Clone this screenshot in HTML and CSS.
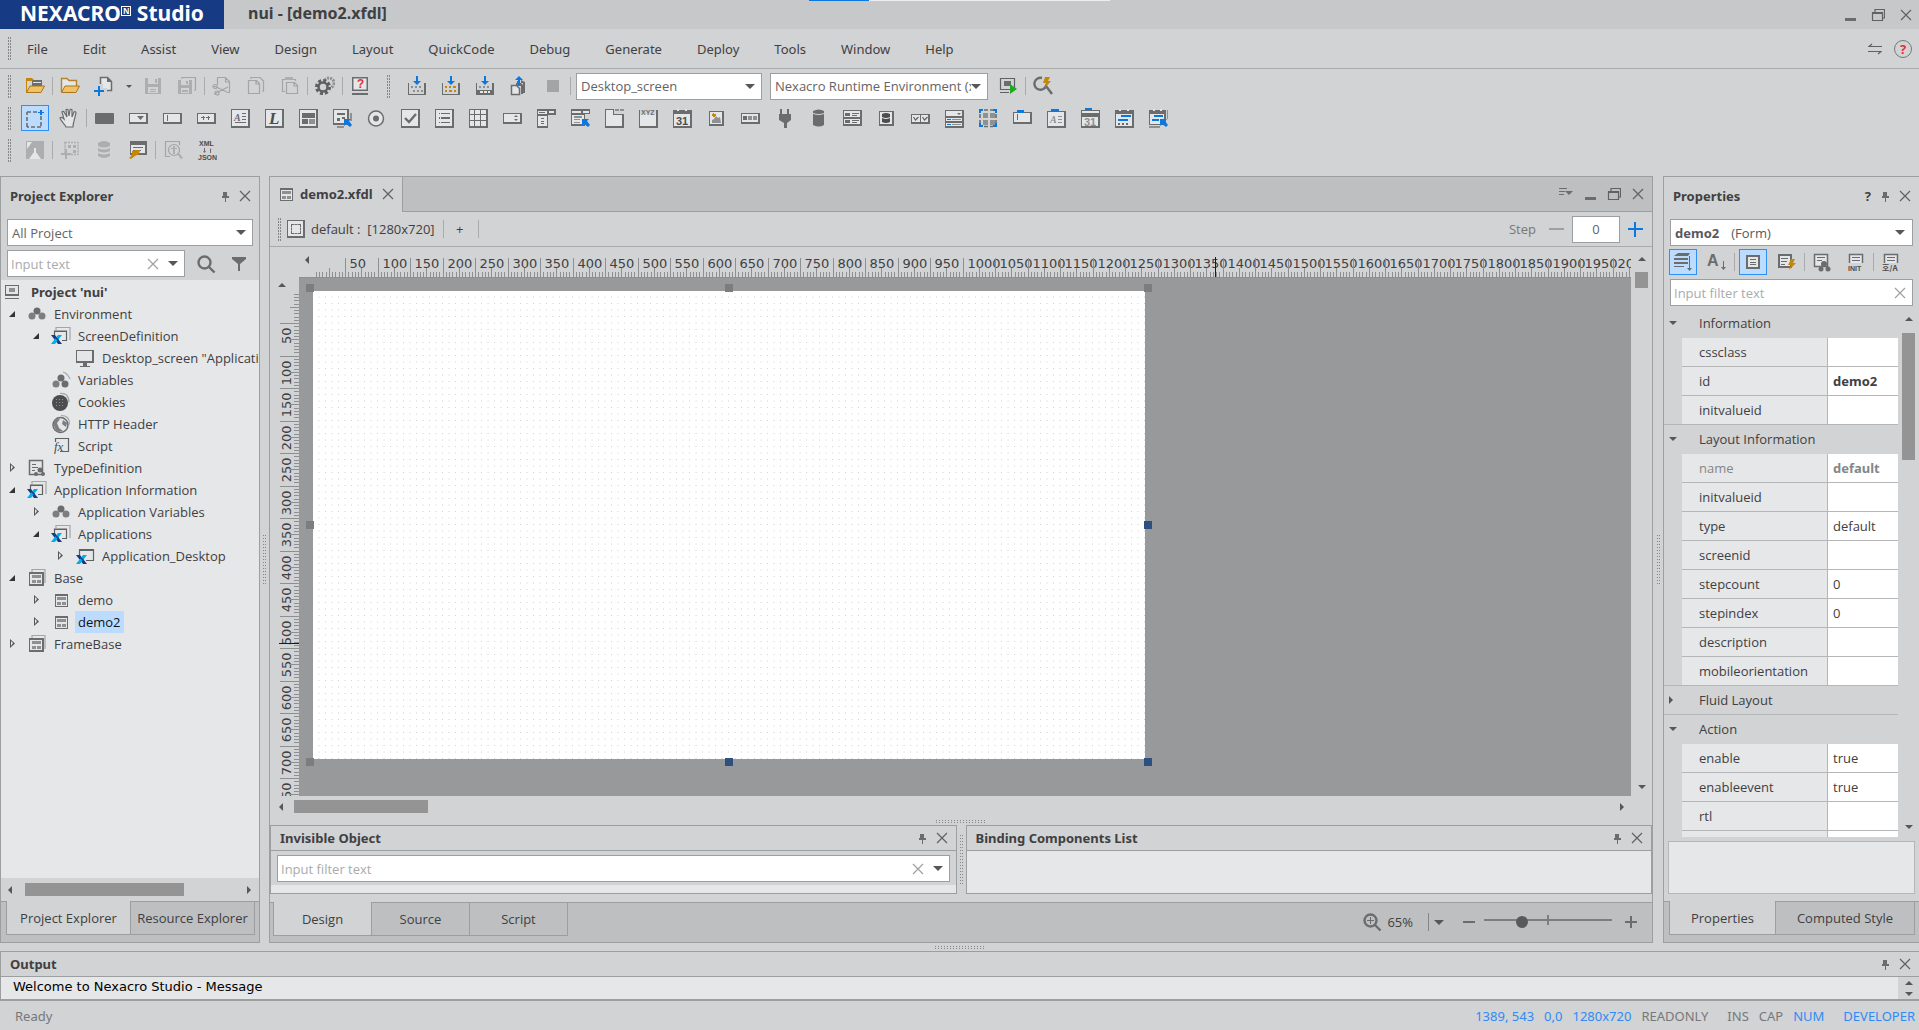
FILE: index.html
```html
<!DOCTYPE html>
<html lang="en">
<head>
  <meta charset="UTF-8">
  <meta name="viewport" content="width=device-width, initial-scale=1.0">
  <title>nui - [demo2.xfdl]</title>
  <link rel="stylesheet" href="styles.css">
</head>
<body>
  <!-- icon sprite -->
  <svg class="sprite" aria-hidden="true">
    <symbol id="close" viewBox="0 0 12 12"><path class="line" d="M1 1L11 11M11 1L1 11"/></symbol>
    <symbol id="pin" viewBox="0 0 12 12"><path class="d" d="M4 2h4v4h2v2H7v4H6V8H3V6h1z"/></symbol>
    <symbol id="minimize" viewBox="0 0 12 12"><path class="d" d="M1 9h11v3H1z"/></symbol>
    <symbol id="restore" viewBox="0 0 14 12"><path class="line" d="M1.500 3.500h10v8h-10zM1 4.500h10M4 3V.5h9.500V9H12"/></symbol>
    <symbol id="tabmenu" viewBox="0 0 14 12"><path class="d" d="M0 0h8v1H0zM0 3h6v1H0zM0 6h5v1H0zM6 3h8l-4 4z"/></symbol>
    <symbol id="swap" viewBox="0 0 14 12"><path class="line" d="M14 3.500H1L4 1M0 8.500h13L10 11"/></symbol>

    <symbol id="openproj" viewBox="0 0 20 20"><path class="o" d="M1 2h6l2 2v1H2v11H1z"/><path class="d" d="M7 5l1-1h9v6H7z"/><path class="l" d="M8 6h8v1H8z"/><path class="flap" d="M5 10h14.500l-3.500 6.500H1.500z"/></symbol>
    <symbol id="folder" viewBox="0 0 20 20"><path class="folder" d="M1.500 16V2.500H7l2 2h7.500V10"/><path class="flap" d="M5 10h14.500l-3.500 6.500H1.500z"/></symbol>
    <symbol id="newfile" viewBox="0 0 20 20"><path class="box" d="M6.500 1.500h7l4 4v9h-11z"/><path class="d" d="M13 1l5 5h-5z"/><path class="halo" d="M4 8h5v4h4v4H4z"/><path class="b" d="M4 10h2v4h4v2H6v4H4v-4H0v-2h4z"/></symbol>
    <symbol id="save" viewBox="0 0 20 20"><path class="g" d="M2 2h16v16H2z"/><path class="bg" d="M5 2h10v6H5zM5 11h10v6H5z"/><path class="g" d="M12 3h2v4h-2zM7 13h6v1H7zM7 15h6v1H7z"/></symbol>
    <symbol id="saveall" viewBox="0 0 20 20"><path class="gline" d="M5 3V1.500h13.500V14H17"/><path class="g" d="M1 4h14v14H1z"/><path class="bg" d="M4 4h8v5H4zM4 12h8v5H4z"/><path class="g" d="M9 5h2v3H9zM5 14h6v2H5z"/></symbol>
    <symbol id="cut" viewBox="0 0 20 20"><path class="gline" d="M5.500 9V1.500h8l4 4v11H15M13.500 2v4H17M2 10l13 6M2 18l14-7"/><circle class="gline" cx="3" cy="10.500" r="2"/><circle class="gline" cx="5" cy="17" r="2"/></symbol>
    <symbol id="copy" viewBox="0 0 20 20"><path class="gline" d="M5 3V1.500h9l3.500 3.500v10H16M2.500 4.500h8l3 3v10h-11zM10 5v3h3"/></symbol>
    <symbol id="paste" viewBox="0 0 20 20"><path class="gline" d="M5 15.500H2.500v-12h13V5M6.500 6.500h8l3 3v8h-11zM14 7v3h3"/><path class="g" d="M5 1h8v3H5z"/></symbol>
    <symbol id="gear" viewBox="0 0 20 20"><circle class="cog2" cx="14" cy="7" r="5"/><circle class="bg" cx="8" cy="11" r="7.500"/><circle class="cog" cx="8" cy="11" r="6.500"/><circle class="ring" cx="8" cy="11" r="4.500"/></symbol>
    <symbol id="helpdoc" viewBox="0 0 20 20"><path class="d" d="M2 1h16v14H2zM2 17h16v2H2z"/><path class="l" d="M3.500 2.500h13v11h-13z"/><text class="t-red" x="7" y="12">?</text></symbol>
    <symbol id="deploy" viewBox="0 0 20 20"><path class="d" d="M1 7h1v11h15V7h2v12H1z"/><path class="g2" d="M4 10h2v2H4zM8 10h2v2H8zM12 10h2v2h-2zM6 14h2v2H6zM10 14h2v2h-2zM14 14h2v2h-2z"/><path class="b" d="M9 0h2v5h3l-4 4-4-4h3z"/></symbol>
    <symbol id="deploy2" viewBox="0 0 20 20"><path class="d" d="M1 7h1v11h15V7h2v12H1z"/><path class="o" d="M4 10h2v2H4zM8 10h2v2H8zM12 10h3v2h-3zM4 14h2v2H4zM8 14h3v2H8zM13 14h2v2h-2z"/><path class="b" d="M9 0h2v5h3l-4 4-4-4h3z"/></symbol>
    <symbol id="deploy3" viewBox="0 0 20 20"><path class="d" d="M1 7h1v7h15V7h2v12H1z"/><path class="l" d="M5 15h3v2H5zM9 15h3v2H9zM13 15h2v2h-2z"/><path class="g2" d="M4 10h2v2H4zM8 10h2v2H8zM12 10h2v2h-2z"/><path class="b" d="M9 0h2v5h3l-4 4-4-4h3z"/></symbol>
    <symbol id="upload" viewBox="0 0 20 20"><path class="d" d="M8 5h3v2H8zM12 4l4 2v11h-2V7h-2zM7 7h5l2 2v9h-2v-8H7z"/><path class="box" d="M2.500 9.500h5l3 3v6h-8z"/><path class="b" d="M10 0l4 4h-3v5H9V4H6z"/></symbol>
    <symbol id="stop" viewBox="0 0 20 20"><path class="stop" d="M4 4h12v12H4z"/></symbol>
    <symbol id="run" viewBox="0 0 20 20"><path class="line" d="M2.500 2.500h14v11h-14zM2 16.500h9"/><path class="d" d="M6 5h7v5H6z"/><path class="green" d="M12 8l7 5-7 5z"/></symbol>
    <symbol id="quick" viewBox="0 0 20 20"><path class="thick" d="M9 2A6 6 0 1 0 13 10L19 18"/><path class="o" d="M12 1h5l-2 4h3l-6 7 1-5h-3z"/></symbol>

    <symbol id="marquee" viewBox="0 0 20 20"><path class="dash" d="M2 4h11M16 8v11M16 19H2M2 19V4"/><path class="b" d="M15 2h2v2h2v1h-2v2h-2V5h-2V4h2z"/></symbol>
    <symbol id="hand" viewBox="0 0 20 20"><path class="palm" d="M7 19c-1-3-4-4-6-9 1-1 2-1 4 1L3 4c0-1 2-1 2 0l3 5-1-7c0-1 2-1 2 0l1 6 1-6c0-1 2-1 2 0v7l2-5c1-1 2 0 2 1l-2 8c-1 3-1 4-1 6z"/></symbol>
    <symbol id="w-button" viewBox="0 0 20 20"><rect class="d" x="1" y="5" width="19" height="11" rx="1"/></symbol>
    <symbol id="w-combo" viewBox="0 0 20 20"><path class="d" d="M1 5h19v11H1z"/><path class="l" d="M2 6h16v8H2z"/><path class="d" d="M9 8h7l-3.500 4z"/></symbol>
    <symbol id="w-edit" viewBox="0 0 20 20"><path class="d" d="M1 5h19v11H1z"/><path class="l" d="M2 6h16v8H2z"/><path class="d" d="M5 7h1v6H5z"/></symbol>
    <symbol id="w-mask" viewBox="0 0 20 20"><path class="d" d="M1 5h19v11H1z"/><path class="l" d="M2 6h16v8H2z"/><path class="d" d="M7 8h1v1h1v1H8v2H7v-2H5V9h2zM12 8h1v1h1v1h-1v2h-1v-2h-2V9h2z"/></symbol>
    <symbol id="w-text" viewBox="0 0 20 20"><path class="d" d="M1 1h19v19H1z"/><path class="l" d="M2 2h16v16H2z"/><path class="d" d="M12 5h4v1h-4zM12 8h4v1h-4zM12 11h4v1h-4zM5 14h11v1H5z"/><text class="t-serif" x="4" y="13">A</text></symbol>
    <symbol id="w-static" viewBox="0 0 20 20"><path class="d" d="M1 1h19v19H1z"/><path class="l" d="M2 2h16v16H2z"/><text class="t-big" x="5" y="16">L</text></symbol>
    <symbol id="w-div" viewBox="0 0 20 20"><path class="d" d="M1 1h19v19H1z"/><path class="l" d="M2 2h16v16H2z"/><path class="d" d="M4 5h13v5H4zM4 11h6v5H4z"/><path class="g2" d="M11 11h6v5h-6z"/></symbol>
    <symbol id="w-popdiv" viewBox="0 0 20 20"><path class="g2" d="M18 5h2v8h-2zM5 18h7v2H5z"/><path class="d" d="M1 1h16v16H1z"/><path class="l" d="M2 2h13v13H2z"/><path class="d" d="M5 5h8v2H5zM5 10h3v3H5zM10 9h3v2h-3z"/><path class="b" d="M12 11h7l-2 2 3 4-2 2-4-3-2 2z"/></symbol>
    <symbol id="w-radio" viewBox="0 0 20 20"><circle class="box" cx="10" cy="10.500" r="7.500"/><circle class="d" cx="10" cy="10.500" r="3"/></symbol>
    <symbol id="w-check" viewBox="0 0 20 20"><path class="d" d="M1 1h19v19H1z"/><path class="l" d="M2 2h16v16H2z"/><path class="thick" d="M5 10l4 4 7-8"/></symbol>
    <symbol id="w-list" viewBox="0 0 20 20"><path class="d" d="M1 1h19v19H1z"/><path class="l" d="M2 2h16v16H2z"/><path class="d" d="M5 5h1v1H5zM7 5h9v1H7zM5 9h1v2H5zM7 9h9v2H7zM5 14h1v1H5zM7 14h9v1H7z"/></symbol>
    <symbol id="w-grid" viewBox="0 0 20 20"><path class="d" d="M1 1h19v19H1z"/><path class="l" d="M2 2h4v4H2zM7 2h5v4H7zM13 2h5v4h-5zM2 7h4v5H2zM7 7h5v5H7zM13 7h5v5h-5zM2 13h4v5H2zM7 13h5v5H7zM13 13h5v5h-5z"/></symbol>
    <symbol id="w-spin" viewBox="0 0 20 20"><path class="d" d="M1 5h19v11H1z"/><path class="l" d="M2 6h16v8H2z"/><path class="d" d="M12 9l2-2 2 2zM12 11h4l-2 2z"/></symbol>
    <symbol id="w-menu" viewBox="0 0 20 20"><path class="d" d="M1 1h19v6h-8v13H1z"/><path class="l" d="M2 3h9v3H2zM13 3h5v2h-5zM2 8h9v10H2z"/><path class="d" d="M3 4h6v1H3zM5 10h3v1H5zM5 13h3v1H5zM5 15h3v1H5z"/></symbol>
    <symbol id="w-popmenu" viewBox="0 0 20 20"><path class="d" d="M1 1h19v5h-5v12H1z"/><path class="l" d="M2 3h9v2H2zM13 3h6v2h-6zM2 7h12v9H2z"/><path class="g2" d="M4 8h8v2H4zM4 11h6v1H4zM4 14h6v1H4z"/><path class="b" d="M12 11h7l-2 2 3 4-2 2-4-3-2 2z"/></symbol>
    <symbol id="w-tab" viewBox="0 0 20 20"><path class="d" d="M1 1h9v5h10v14H1z"/><path class="l" d="M2 2h7v5h9v11H2z"/><path class="g2" d="M11 1h4v2h-4zM16 1h4v2h-4z"/></symbol>
    <symbol id="w-group" viewBox="0 0 20 20"><path class="d" d="M1 2h1v16h16V2h2v18H1z"/><path class="l" d="M2 6h16v12H2z"/><text class="t-mini" x="3" y="7">XYZ</text></symbol>
    <symbol id="w-cal" viewBox="0 0 20 20"><path class="d" d="M1 2h19v18H1z"/><path class="l" d="M2 6h16v12H2zM5 1h2v2H5zM13 1h2v2h-2z"/><text class="t-cal" x="4" y="17">31</text></symbol>
    <symbol id="w-image" viewBox="0 0 20 20"><path class="d" d="M3 3h15v15H3z"/><path class="l" d="M4 4h12v12H4z"/><path class="g2" d="M6 15v-3l2-1 2-3 2 2 2-1 1 6z"/><path class="o" d="M6 6h1V5h1v1h2v2H9v1H7V8H6z"/></symbol>
    <symbol id="w-progress" viewBox="0 0 20 20"><path class="d" d="M1 5h19v11H1z"/><path class="l" d="M2 6h16v8H2z"/><path class="d" d="M3 8h4v4H3z"/><path class="g2" d="M8 8h4v4H8zM13 8h4v4h-4z"/></symbol>
    <symbol id="w-plugin" viewBox="0 0 20 20"><path class="d" d="M6 1h2v5h5V1h2v5h2v6l-4 3v5h-3v-5l-5-3V6h1z"/></symbol>
    <symbol id="w-data" viewBox="0 0 20 20"><path class="d" d="M5 3q6-3 11 0v2q-5 2-11 0zM5 6q6 2 11 0v11q-5 3-11 0z"/></symbol>
    <symbol id="w-listview" viewBox="0 0 20 20"><path class="d" d="M1 2h19v16H1z"/><path class="l" d="M2 3h16v6H2zM2 11h16v5H2z"/><path class="d" d="M3 5h5v3H3zM10 5h7v1h-7zM10 7h5v1h-5zM3 12h5v3H3zM10 12h7v1h-7zM10 14h5v1h-5z"/></symbol>
    <symbol id="w-filedown" viewBox="0 0 20 20"><path class="d" d="M3 3h15v15H3z"/><path class="l" d="M4 4h12v12H4z"/><path class="dark" d="M6 6q4-2 8 0v3q-4 2-8 0zM6 10q4 2 8 0v4q-4 2-8 0z"/></symbol>
    <symbol id="w-checkset" viewBox="0 0 20 20"><path class="d" d="M1 6h19v10H1z"/><path class="l" d="M2 7h8v7H2zM11 7h7v7h-7z"/><path class="line" d="M3.500 9l2 3 3-3M12.500 9l2 3 3-3"/></symbol>
    <symbol id="w-multi" viewBox="0 0 20 20"><path class="d" d="M1 2h19v18H1z"/><path class="l" d="M2 3h16v5H2zM2 10h16v3H2zM2 15h16v3H2z"/><path class="d" d="M13 5h4l-2 2z"/><path class="b" d="M3 11h4v1H3zM3 16h4v1H3z"/><path class="g2" d="M8 11h9v1H8zM8 16h9v1H8z"/></symbol>
    <symbol id="w-layout" viewBox="0 0 20 20"><path class="dash" d="M6 2h9M6 18.500h9M2 6v9M18 6v9"/><path class="g2" d="M5 5h5v5H5zM12 5h5v5h-5zM5 12h5v5H5zM12 12h5v5h-5z"/><path class="b" d="M1 1h4v2H3v2H1zM15 1h4v4h-2V3h-2zM1 15h2v2h2v2H1zM17 15h2v4h-4v-2h2z"/></symbol>
    <symbol id="w-popedit" viewBox="0 0 20 20"><path class="d" d="M1 4h19v12H1z"/><path class="l" d="M2 5h16v9H2z"/><path class="d" d="M5 6h1v6H5z"/><path class="b" d="M5 2h7v3H5z"/></symbol>
    <symbol id="w-textarea" viewBox="0 0 20 20"><path class="d" d="M1 3h19v17H1z"/><path class="l" d="M2 4h16v14H2z"/><path class="g2" d="M12 8h4v1h-4zM12 11h4v1h-4zM12 14h4v1h-4z"/><path class="b" d="M5 1h8v3H5z"/><text class="t-serif t-gray" x="4" y="15">A</text></symbol>
    <symbol id="w-popcal" viewBox="0 0 20 20"><path class="d" d="M1 2h19v18H1z"/><path class="l" d="M2 3h17v2H2zM2 9h16v9H2z"/><path class="b" d="M5 0h7v2H5z"/><text class="t-cal t-gray" x="4" y="18">31</text></symbol>
    <symbol id="w-daterange" viewBox="0 0 20 20"><path class="d" d="M1 2h19v18H1z"/><path class="l" d="M2 6h16v12H2zM5 1h2v2H5zM13 1h2v2h-2z"/><path class="b" d="M7 7h10v2H7zM4 11h10v2H4z"/><path class="d" d="M4 15h2v2H4zM8 15h2v2H8zM12 15h2v2h-2z"/></symbol>
    <symbol id="w-poprange" viewBox="0 0 20 20"><path class="d" d="M1 2h17v15H1z"/><path class="l" d="M2 6h14v10H2zM5 1h2v2H5zM12 1h2v2h-2z"/><path class="b" d="M6 7h9v2H6zM4 11h7v2H4zM12 11h7l-2 2 3 4-2 2-4-3-2 2z"/><path class="g2" d="M1 18h11v2H1zM19 2h1v9h-1z"/></symbol>

    <symbol id="theme" viewBox="0 0 20 20"><path class="g" d="M1 1h18v18H1z"/><path class="l" d="M9 8h2v4l5 7H4l5-7zM2 2h5L2 9z"/></symbol>
    <symbol id="addgrid" viewBox="0 0 20 20"><path class="gdash" d="M5 2.500h13v12H5z"/><path class="g" d="M8 5h3v3H8zM13 5h3v3h-3zM13 10h3v3h-3zM5 9h2v4h4v2H7v4H5v-4H1v-2h4z"/></symbol>
    <symbol id="dataset" viewBox="0 0 20 20"><path class="g" d="M4 3q6-4 12 0v3q-6 3-12 0zM4 8q6 3 12 0v3q-6 3-12 0zM4 13q6 3 12 0v3q-6 4-12 0z"/></symbol>
    <symbol id="bind" viewBox="0 0 20 20"><path class="d" d="M2 1h17v14H2z"/><path class="l" d="M3 5h14v8H3z"/><path class="d" d="M5 7h10v1H5zM5 10h8v1H5z"/><path class="o" d="M4 11l4-1h4l-1 4-4 2-4 3-2-1 3-3z"/></symbol>
    <symbol id="preview" viewBox="0 0 20 20"><path class="gline" d="M16.500 5V1.500h-14v15H7"/><circle class="gline" cx="11" cy="10" r="5.500"/><path class="g" d="M10 6h2v8h-2zM8 8h6v1H8zM14 14l2-1 4 5-2 1z"/></symbol>
    <symbol id="xmljson" viewBox="0 0 20 20"><text class="t-xml" x="2" y="6">XML</text><path class="d" d="M7 8h1v3h1l-1.500 2L6 11h1zM13 8l1.500 2H14v3h-1z"/><text class="t-xml" x="1" y="20">JSON</text></symbol>

    <symbol id="project" viewBox="0 0 16 16"><path class="d" d="M1 1h14v11H1zM1 14h14v1H1z"/><path class="l" d="M2 2h12v8H2z"/><path class="g2" d="M5 4h6v4H5z"/></symbol>
    <symbol id="cubes" viewBox="0 0 20 20"><circle class="d" cx="10" cy="7" r="3.500"/><circle class="g3" cx="5" cy="12" r="3.500"/><circle class="g3" cx="15" cy="12" r="3.500"/></symbol>
    <symbol id="vars" viewBox="0 0 20 20"><path class="gline" d="M12 2q4 1 7 7"/><circle class="d" cx="10" cy="8" r="3.500"/><circle class="g3" cx="5" cy="14" r="3.500"/><circle class="d" cx="14" cy="14" r="3.500"/></symbol>
    <symbol id="cookie" viewBox="0 0 20 20"><path class="gline" d="M9 1.500q9-1 9 9"/><circle class="dark" cx="9" cy="11" r="8"/><path class="g2" d="M5 7h1v1H5zM8 7h1v1H8zM11 7h1v1h-1zM5 10h1v1H5zM8 10h1v1H8zM11 10h1v1h-1zM5 13h1v1H5zM8 13h1v1H8zM11 13h1v1h-1z"/></symbol>
    <symbol id="globe" viewBox="0 0 20 20"><path class="gline" d="M10 1.500q9 0 8.500 9"/><circle class="box" cx="9.500" cy="11" r="7.500"/><path class="g3" d="M3 8q3-4 6-3l-3 4 2 5 4 3-5 1q-5-4-4-10zM12 6l4 3-1 4-4-3z"/></symbol>
    <symbol id="script" viewBox="0 0 20 20"><path class="l" d="M5 3h12v12H5z"/><path class="line" d="M4.500 6V2.500h13v13H9"/><text class="t-fx" x="3" y="15">fx</text></symbol>
    <symbol id="typedef" viewBox="0 0 20 20"><path class="box" d="M2.500 2.500h13v14h-13z"/><path class="d" d="M5 6h4v1H5zM5 9h6v1H5zM5 12h3v1H5z"/><circle class="d" cx="13" cy="12" r="2.500"/><circle class="d" cx="9" cy="16" r="2"/><circle class="d" cx="16" cy="16" r="2"/></symbol>
    <symbol id="xapps" viewBox="0 0 20 20"><path class="gline" d="M5 4V1.500h14V14"/><path class="line" d="M3.500 9V5h12v9.500H11M3 5.500h13"/><path class="navy" d="M0 9h4l7 9H7z"/><path class="cyan" d="M7 9h4l-7 9H0z"/><path class="navy" d="M4 12l3 3 1-1-3-3z"/></symbol>
    <symbol id="xapp" viewBox="0 0 20 20"><path class="line" d="M4.500 9V3.500h14v11H11M4 4.500h14"/><path class="navy" d="M1 9h4l7 9H8z"/><path class="cyan" d="M8 9h4l-7 9H1z"/><path class="navy" d="M5 12l3 3 1-1-3-3z"/></symbol>
    <symbol id="screen" viewBox="0 0 20 20"><path class="d" d="M1 2h18v13H1zM8 15h4v3h3v1H5v-1h3z"/><path class="l" d="M2 3h15v10H2z"/></symbol>
    <symbol id="forms" viewBox="0 0 20 20"><path class="gline" d="M5 4V1.500h13V15"/><path class="d" d="M2 4h15v14H2z"/><path class="l" d="M3 6h12v10H3z"/><path class="g2" d="M5 7h9v3H5zM5 12h4v3H5zM10 12h4v3h-4z"/></symbol>
    <symbol id="form" viewBox="0 0 20 20"><path class="d" d="M4 4h13v13H4z"/><path class="l" d="M5 6h11v10H5z"/><path class="g2" d="M6 7h9v3H6zM6 12h4v3H6zM11 12h4v3h-4z"/></symbol>
    <symbol id="search" viewBox="0 0 20 20"><circle class="thick" cx="8.500" cy="8.500" r="6"/><path class="thick" d="M13 13l5.500 5.500"/></symbol>
    <symbol id="filter" viewBox="0 0 16 16"><path class="d" d="M1 1h14v2L9 8v7H7V8L1 3z"/></symbol>
    <symbol id="zoomin" viewBox="0 0 20 20"><circle class="thick" cx="8.500" cy="8.500" r="6"/><path class="thick" d="M13 13l5.500 5.500"/><path class="d" d="M8 5h1v3h3v1H9v3H8V9H5V8h3z"/></symbol>

    <symbol id="p-group" viewBox="0 0 20 20"><path class="d" d="M5 1h12l-2 3H1zM1 6h14v2H1zM1 10h14v2H1zM1 14h10v1H1zM16 4h1v12h2l-2.500 3L14 16h2z"/></symbol>
    <symbol id="p-sort" viewBox="0 0 20 20"><text class="t-sort" x="0" y="14">A</text><path class="d" d="M16 9h1v6h2l-2.500 3-2.500-3h2z"/></symbol>
    <symbol id="p-prop" viewBox="0 0 20 20"><path class="d" d="M3 3h14v14H3z"/><path class="l" d="M5 5h10v10H5z"/><path class="d" d="M7 7h6v1H7zM7 10h6v1H7zM7 12h6v1H7z"/></symbol>
    <symbol id="p-event" viewBox="0 0 20 20"><path class="d" d="M1 2h14v14H1z"/><path class="l" d="M3 4h10v10H3z"/><path class="d" d="M4 6h7v1H4zM4 9h6v1H4zM4 12h4v1H4z"/><path class="o" d="M14 7h4l-2 4h3l-7 7 2-5h-3z"/></symbol>
    <symbol id="p-bind" viewBox="0 0 20 20"><path class="box" d="M2.500 2.500h13v12h-13z"/><path class="d" d="M5 5h8v1H5zM5 8h5v1H5z"/><circle class="d" cx="12" cy="12" r="3"/><circle class="d" cx="9" cy="17" r="2.500"/><circle class="d" cx="16" cy="17" r="2.500"/></symbol>
    <symbol id="p-init" viewBox="0 0 20 20"><path class="box" d="M3.500 11V2.500h13V11"/><path class="d" d="M6 5h8v1H6zM6 8h8v1H6z"/><text class="t-xml" x="2" y="19">INIT</text></symbol>
    <symbol id="p-lang" viewBox="0 0 20 20"><path class="box" d="M3.500 11V2.500h13V11"/><path class="d" d="M6 5h8v1H6zM6 8h8v1H6z"/><text class="t-lang" x="1" y="19">호/A</text></symbol>
  </svg>

  <header class="titlebar">
    <div class="logo">NEXACRO<sup>N</sup> Studio</div>
    <h1>nui - [demo2.xfdl]</h1>
    <div class="loading"><span></span></div>
    <div class="winbtns">
      <button aria-label="Minimize"><svg class="i12"><use href="#minimize"/></svg></button>
      <button aria-label="Restore"><svg class="i14"><use href="#restore"/></svg></button>
      <button aria-label="Close"><svg class="i12"><use href="#close"/></svg></button>
    </div>
  </header>

  <nav class="menubar">
    <span class="grip"></span>
    <button>File</button>
    <button>Edit</button>
    <button>Assist</button>
    <button>View</button>
    <button>Design</button>
    <button>Layout</button>
    <button>QuickCode</button>
    <button>Debug</button>
    <button>Generate</button>
    <button>Deploy</button>
    <button>Tools</button>
    <button>Window</button>
    <button>Help</button>
    <div class="menu-right">
      <button aria-label="Switch"><svg class="i14"><use href="#swap"/></svg></button>
      <button class="round-help">?</button>
    </div>
  </nav>

  <div class="toolbars">
    <div class="toolbar">
      <span class="grip"></span>
      <button aria-label="Open project"><svg><use href="#openproj"/></svg></button>
      <i class="sep"></i>
      <button aria-label="Open file"><svg><use href="#folder"/></svg></button>
      <button aria-label="New"><svg><use href="#newfile"/></svg></button>
      <button class="drop" aria-label="New options"><i class="caret small"></i></button>
      <button aria-label="Save"><svg><use href="#save"/></svg></button>
      <button aria-label="Save all"><svg><use href="#saveall"/></svg></button>
      <i class="sep"></i>
      <button aria-label="Cut"><svg><use href="#cut"/></svg></button>
      <button aria-label="Copy"><svg><use href="#copy"/></svg></button>
      <button aria-label="Paste"><svg><use href="#paste"/></svg></button>
      <i class="sep"></i>
      <button aria-label="Options"><svg><use href="#gear"/></svg></button>
      <i class="sep"></i>
      <button aria-label="Help"><svg><use href="#helpdoc"/></svg></button>
      <span class="grip"></span>
      <button aria-label="Generate file"><svg><use href="#deploy"/></svg></button>
      <button aria-label="Generate application"><svg><use href="#deploy2"/></svg></button>
      <button aria-label="Generate all"><svg><use href="#deploy3"/></svg></button>
      <button aria-label="Upload"><svg><use href="#upload"/></svg></button>
      <button aria-label="Stop"><svg><use href="#stop"/></svg></button>
      <i class="sep"></i>
      <span class="select screen"><select aria-label="Screen"><option>Desktop_screen</option></select></span>
      <span class="select runtime"><select aria-label="Runtime"><option>Nexacro Runtime Environment (x64)</option></select></span>
      <button aria-label="Launch"><svg><use href="#run"/></svg></button>
      <i class="sep"></i>
      <button aria-label="Quick view"><svg><use href="#quick"/></svg></button>
    </div>
    <div class="toolbar">
      <span class="grip"></span>
      <button class="on" aria-label="Select"><svg><use href="#marquee"/></svg></button>
      <button aria-label="Pan"><svg><use href="#hand"/></svg></button>
      <i class="sep"></i>
      <button aria-label="Button"><svg><use href="#w-button"/></svg></button>
      <button aria-label="Combo"><svg><use href="#w-combo"/></svg></button>
      <button aria-label="Edit"><svg><use href="#w-edit"/></svg></button>
      <button aria-label="MaskEdit"><svg><use href="#w-mask"/></svg></button>
      <button aria-label="TextArea"><svg><use href="#w-text"/></svg></button>
      <button aria-label="Static"><svg><use href="#w-static"/></svg></button>
      <button aria-label="Div"><svg><use href="#w-div"/></svg></button>
      <button aria-label="PopupDiv"><svg><use href="#w-popdiv"/></svg></button>
      <button aria-label="Radio"><svg><use href="#w-radio"/></svg></button>
      <button aria-label="CheckBox"><svg><use href="#w-check"/></svg></button>
      <button aria-label="ListBox"><svg><use href="#w-list"/></svg></button>
      <button aria-label="Grid"><svg><use href="#w-grid"/></svg></button>
      <button aria-label="Spin"><svg><use href="#w-spin"/></svg></button>
      <button aria-label="Menu"><svg><use href="#w-menu"/></svg></button>
      <button aria-label="PopupMenu"><svg><use href="#w-popmenu"/></svg></button>
      <button aria-label="Tab"><svg><use href="#w-tab"/></svg></button>
      <button aria-label="GroupBox"><svg><use href="#w-group"/></svg></button>
      <button aria-label="Calendar"><svg><use href="#w-cal"/></svg></button>
      <button aria-label="ImageViewer"><svg><use href="#w-image"/></svg></button>
      <button aria-label="ProgressBar"><svg><use href="#w-progress"/></svg></button>
      <button aria-label="Plugin"><svg><use href="#w-plugin"/></svg></button>
      <button aria-label="Dataset"><svg><use href="#w-data"/></svg></button>
      <button aria-label="ListView"><svg><use href="#w-listview"/></svg></button>
      <button aria-label="FileDownload"><svg><use href="#w-filedown"/></svg></button>
      <button aria-label="CheckBoxSet"><svg><use href="#w-checkset"/></svg></button>
      <button aria-label="MultiCombo"><svg><use href="#w-multi"/></svg></button>
      <button aria-label="Layout"><svg><use href="#w-layout"/></svg></button>
      <button aria-label="TextField"><svg><use href="#w-popedit"/></svg></button>
      <button aria-label="MultiLineTextField"><svg><use href="#w-textarea"/></svg></button>
      <button aria-label="DateField"><svg><use href="#w-popcal"/></svg></button>
      <button aria-label="DateRangePicker"><svg><use href="#w-daterange"/></svg></button>
      <button aria-label="PopupDateRangePicker"><svg><use href="#w-poprange"/></svg></button>
    </div>
    <div class="toolbar">
      <span class="grip"></span>
      <button aria-label="Theme"><svg><use href="#theme"/></svg></button>
      <i class="sep"></i>
      <button aria-label="Add grid"><svg><use href="#addgrid"/></svg></button>
      <button aria-label="Dataset list"><svg><use href="#dataset"/></svg></button>
      <button aria-label="Bind"><svg><use href="#bind"/></svg></button>
      <i class="sep"></i>
      <button aria-label="Preview"><svg><use href="#preview"/></svg></button>
      <button aria-label="XML to JSON"><svg><use href="#xmljson"/></svg></button>
    </div>
  </div>

  <main class="workspace">
    <aside class="panel explorer">
      <div class="panel-head">
        <h2>Project Explorer</h2>
        <button aria-label="Pin"><svg class="i12"><use href="#pin"/></svg></button>
        <button aria-label="Close"><svg class="i12"><use href="#close"/></svg></button>
      </div>
      <div class="filters">
        <span class="select"><select aria-label="Project filter"><option>All Project</option></select></span>
        <div class="search-row">
          <div class="field">
            <input type="text" aria-label="Search" placeholder="Input text">
            <button class="clear" aria-label="Clear"><svg class="i12"><use href="#close"/></svg></button>
            <button aria-label="History"><i class="caret"></i></button>
          </div>
          <button aria-label="Find"><svg class="i20"><use href="#search"/></svg></button>
          <button aria-label="Filter"><svg class="i16"><use href="#filter"/></svg></button>
        </div>
      </div>
      <div class="tree">
        <div class="root"><svg class="i16"><use href="#project"/></svg>Project 'nui'</div>
        <ul>
          <li><div class="node open"><i></i><svg><use href="#cubes"/></svg><span>Environment</span></div>
            <ul>
              <li><div class="node open"><i></i><svg><use href="#xapps"/></svg><span>ScreenDefinition</span></div>
                <ul>
                  <li><div class="node"><i></i><svg><use href="#screen"/></svg><span>Desktop_screen "Application"</span></div></li>
                </ul>
              </li>
              <li><div class="node"><i></i><svg><use href="#vars"/></svg><span>Variables</span></div></li>
              <li><div class="node"><i></i><svg><use href="#cookie"/></svg><span>Cookies</span></div></li>
              <li><div class="node"><i></i><svg><use href="#globe"/></svg><span>HTTP Header</span></div></li>
              <li><div class="node"><i></i><svg><use href="#script"/></svg><span>Script</span></div></li>
            </ul>
          </li>
          <li><div class="node shut"><i></i><svg><use href="#typedef"/></svg><span>TypeDefinition</span></div></li>
          <li><div class="node open"><i></i><svg><use href="#xapps"/></svg><span>Application Information</span></div>
            <ul>
              <li><div class="node shut"><i></i><svg><use href="#cubes"/></svg><span>Application Variables</span></div></li>
              <li><div class="node open"><i></i><svg><use href="#xapps"/></svg><span>Applications</span></div>
                <ul>
                  <li><div class="node shut"><i></i><svg><use href="#xapp"/></svg><span>Application_Desktop</span></div></li>
                </ul>
              </li>
            </ul>
          </li>
          <li><div class="node open"><i></i><svg><use href="#forms"/></svg><span>Base</span></div>
            <ul>
              <li><div class="node shut"><i></i><svg><use href="#form"/></svg><span>demo</span></div></li>
              <li><div class="node shut selected"><i></i><svg><use href="#form"/></svg><span>demo2</span></div></li>
            </ul>
          </li>
          <li><div class="node shut"><i></i><svg><use href="#forms"/></svg><span>FrameBase</span></div></li>
        </ul>
      </div>
      <div class="hscroll"><i class="tri left"></i><div class="rail"><b></b></div><i class="tri right"></i></div>
      <div class="tabs">
        <button class="active">Project Explorer</button>
        <button>Resource Explorer</button>
      </div>
    </aside>

    <div class="split-v"><span></span></div>

    <section class="panel editor">
      <div class="doc-tabs">
        <div class="doc-tab">
          <svg class="i20"><use href="#form"/></svg>
          <span>demo2.xfdl</span>
          <button aria-label="Close tab"><svg class="i12"><use href="#close"/></svg></button>
        </div>
        <div class="winbtns">
          <button aria-label="Tab list"><svg class="i14"><use href="#tabmenu"/></svg></button>
          <button aria-label="Minimize"><svg class="i12"><use href="#minimize"/></svg></button>
          <button aria-label="Restore"><svg class="i14"><use href="#restore"/></svg></button>
          <button aria-label="Close"><svg class="i12"><use href="#close"/></svg></button>
        </div>
      </div>
      <div class="layoutbar">
        <span class="grip"></span>
        <span class="layout-icon"></span>
        <span>default : &nbsp;[1280x720]</span>
        <i class="sep"></i>
        <button aria-label="Add layout">+</button>
        <i class="sep"></i>
        <label for="step">Step</label>
        <button class="minus" aria-label="Previous step"></button>
        <input type="text" id="step" value="0">
        <button class="plus" aria-label="Next step"></button>
      </div>
      <div class="stage">
        <svg class="ruler-h" id="rulerH"></svg>
        <svg class="ruler-v" id="rulerV"></svg>
        <i class="tri left ruler-left"></i>
        <i class="tri up ruler-up"></i>
        <div class="canvas">
          <div class="form">
            <i class="handle tl"></i><i class="handle tc"></i><i class="handle tr"></i>
            <i class="handle ml"></i><i class="handle mr live"></i>
            <i class="handle bl"></i><i class="handle bc live"></i><i class="handle br live"></i>
          </div>
        </div>
        <div class="vscroll"><i class="tri up"></i><div class="rail"><b></b></div><i class="tri down"></i></div>
        <div class="hscroll"><i class="tri left"></i><div class="rail"><b></b></div><i class="tri right"></i></div>
      </div>
      <div class="split-h"><span></span></div>
      <div class="docks">
        <section class="dock">
          <div class="dock-head">
            <h2>Invisible Object</h2>
            <button aria-label="Pin"><svg class="i12"><use href="#pin"/></svg></button>
            <button aria-label="Close"><svg class="i12"><use href="#close"/></svg></button>
          </div>
          <div class="dock-filter">
            <div class="field">
              <input type="text" aria-label="Filter objects" placeholder="Input filter text">
              <button class="clear" aria-label="Clear"><svg class="i12"><use href="#close"/></svg></button>
              <button aria-label="History"><i class="caret"></i></button>
            </div>
          </div>
        </section>
        <div class="split-v"><span></span></div>
        <section class="dock">
          <div class="dock-head">
            <h2>Binding Components List</h2>
            <button aria-label="Pin"><svg class="i12"><use href="#pin"/></svg></button>
            <button aria-label="Close"><svg class="i12"><use href="#close"/></svg></button>
          </div>
        </section>
      </div>
      <div class="tabs view-tabs">
        <button class="active">Design</button>
        <button>Source</button>
        <button>Script</button>
        <div class="zoombar">
          <svg class="i20"><use href="#zoomin"/></svg>
          <label for="zoom">65%</label>
          <i class="sep"></i>
          <button aria-label="Zoom presets"><i class="caret"></i></button>
          <button class="minus" aria-label="Zoom out"></button>
          <input type="range" id="zoom" min="0" max="100" value="28">
          <button class="plus" aria-label="Zoom in"></button>
        </div>
      </div>
    </section>

    <div class="split-v wide"><span></span></div>

    <aside class="panel properties">
      <div class="panel-head">
        <h2>Properties</h2>
        <button aria-label="Help"><b>?</b></button>
        <button aria-label="Pin"><svg class="i12"><use href="#pin"/></svg></button>
        <button aria-label="Close"><svg class="i12"><use href="#close"/></svg></button>
      </div>
      <div class="filters">
        <button class="target"><b>demo2</b>(Form)<i class="caret"></i></button>
        <div class="prop-tools">
          <button class="on" aria-label="Categorized"><svg><use href="#p-group"/></svg></button>
          <button aria-label="Alphabetical"><svg><use href="#p-sort"/></svg></button>
          <i class="sep"></i>
          <button class="on" aria-label="Properties"><svg><use href="#p-prop"/></svg></button>
          <button aria-label="Events"><svg><use href="#p-event"/></svg></button>
          <i class="sep"></i>
          <button aria-label="Bindings"><svg><use href="#p-bind"/></svg></button>
          <button aria-label="Init values"><svg><use href="#p-init"/></svg></button>
          <i class="sep"></i>
          <button aria-label="Language"><svg><use href="#p-lang"/></svg></button>
        </div>
        <div class="field">
          <input type="text" aria-label="Filter properties" placeholder="Input filter text">
          <button class="clear" aria-label="Clear"><svg class="i12"><use href="#close"/></svg></button>
        </div>
      </div>
      <div class="prop-body">
        <div class="prop-list">
          <table>
            <colgroup>
              <col class="col-mark">
              <col class="col-name">
              <col>
            </colgroup>
            <tbody>
              <tr class="group"><td><i class="tri down"></i></td><th colspan="2">Information</th></tr>
              <tr><td></td><th>cssclass</th><td></td></tr>
              <tr><td></td><th>id</th><td><b>demo2</b></td></tr>
              <tr class="last"><td></td><th>initvalueid</th><td></td></tr>
              <tr class="group"><td><i class="tri down"></i></td><th colspan="2">Layout Information</th></tr>
              <tr class="readonly"><td></td><th>name</th><td><b>default</b></td></tr>
              <tr><td></td><th>initvalueid</th><td></td></tr>
              <tr><td></td><th>type</th><td>default</td></tr>
              <tr><td></td><th>screenid</th><td></td></tr>
              <tr><td></td><th>stepcount</th><td>0</td></tr>
              <tr><td></td><th>stepindex</th><td>0</td></tr>
              <tr><td></td><th>description</th><td></td></tr>
              <tr class="last"><td></td><th>mobileorientation</th><td></td></tr>
              <tr class="group last"><td><i class="tri right"></i></td><th colspan="2">Fluid Layout</th></tr>
              <tr class="group"><td><i class="tri down"></i></td><th colspan="2">Action</th></tr>
              <tr><td></td><th>enable</th><td>true</td></tr>
              <tr><td></td><th>enableevent</th><td>true</td></tr>
              <tr><td></td><th>rtl</th><td></td></tr>
              <tr><td></td><th></th><td></td></tr>
            </tbody>
          </table>
        </div>
        <div class="vscroll"><i class="tri up"></i><div class="rail"><b></b></div><i class="tri down"></i></div>
      </div>
      <div class="prop-desc"></div>
      <div class="tabs">
        <button class="active">Properties</button>
        <button>Computed Style</button>
      </div>
    </aside>
  </main>

  <div class="split-h"><span></span></div>

  <section class="output">
    <div class="dock-head">
      <h2>Output</h2>
      <button aria-label="Pin"><svg class="i12"><use href="#pin"/></svg></button>
      <button aria-label="Close"><svg class="i12"><use href="#close"/></svg></button>
    </div>
    <div class="output-body">
      <p>Welcome to Nexacro Studio - Message</p>
      <div class="vscroll"><i class="tri up"></i><i class="tri down"></i></div>
    </div>
  </section>

  <footer class="statusbar">
    <span class="ready">Ready</span>
    <span class="on">1389, 543</span>
    <span class="on">0,0</span>
    <span class="on">1280x720</span>
    <span>READONLY</span>
    <span class="wide">INS</span>
    <span>CAP</span>
    <span class="on">NUM</span>
    <span class="on wide">DEVELOPER</span>
  </footer>

  <script src="ruler.js"></script>
</body>
</html>
```
FILE: styles.css
```css
:root {
  --bg: #d1d3d4;
  --strip: #bdbfc1;
  --light: #e6e7e9;
  --line: #9c9ea0;
  --icon: #6b6c6e;
  --text: #3f4042;
  --blue: #0a78e0;
  --zoom: 0.65;
}
* {
  box-sizing: border-box;
}
body {
  margin: 0;
  height: 100vh;
  display: flex;
  flex-direction: column;
  background: var(--bg);
  color: var(--text);
  font: 13px/18px "Open Sans", "Noto Sans", "Noto Sans CJK KR", sans-serif;
  overflow: hidden;
}
h1, h2, p, ul {
  margin: 0;
  padding: 0;
}
ul {
  list-style: none;
}
h1, h2, b, .root, .doc-tab {
  font-family: "Noto Sans", "Open Sans", sans-serif;
  font-weight: bold;
}
h2 {
  font-size: 13px;
}
button {
  display: flex;
  align-items: center;
  justify-content: center;
  padding: 0;
  border: 0;
  background: none;
  color: inherit;
  font: inherit;
}
input, select {
  font: inherit;
  color: #636466;
  outline: none;
  border-radius: 0;
}
input::placeholder {
  color: #a9abad;
  opacity: 1;
}
svg {
  display: block;
  flex: none;
}

/* icons */
.sprite { display: none; }
.i12 { width: 12px; height: 12px; }
.i14 { width: 14px; height: 12px; }
.i16 { width: 16px; height: 16px; }
.i20 { width: 20px; height: 20px; }
.d { fill: var(--icon); }
.dark { fill: #4c4d4f; }
.l { fill: #e4e6e8; }
.b { fill: var(--blue); }
.g { fill: #acaeb0; }
.g2 { fill: #8f9092; }
.g3 { fill: #7d7e80; }
.o { fill: #c48708; }
.bg { fill: var(--bg); }
.green { fill: #1fab1f; }
.navy { fill: #173a85; }
.cyan { fill: #00aeef; }
.stop { fill: #a3a4a6; }
.halo { fill: var(--bg); }
.box { fill: #e4e6e8; stroke: var(--icon); stroke-width: 1.5; }
.line { fill: none; stroke: #606163; stroke-width: 1.2; }
.gline { fill: none; stroke: #a3a5a7; stroke-width: 1.2; }
.gdash { fill: none; stroke: #acaeb0; stroke-width: 1.5; stroke-dasharray: 2 1; }
.thick { fill: none; stroke: #6b6c6e; stroke-width: 2.4; }
.dash { fill: none; stroke: #6b6c6e; stroke-width: 1.6; stroke-dasharray: 4 2; }
.folder { fill: #e4e6e8; stroke: #b5832a; stroke-width: 1.4; }
.flap { fill: #f0c268; stroke: #a8761c; }
.palm { fill: #e4e6e8; stroke: var(--icon); stroke-width: 1.2; }
.cog { fill: none; stroke: #5f6062; stroke-width: 3; stroke-dasharray: 3 2; }
.cog2 { fill: none; stroke: #8f9092; stroke-width: 3; stroke-dasharray: 2 1; }
.ring { fill: none; stroke: #5f6062; stroke-width: 2.5; }
.t-red { font: bold 12px "Liberation Mono", monospace; fill: #e0303c; }
.t-serif { font: italic bold 10px "Liberation Serif", serif; fill: var(--icon); }
.t-big { font: italic bold 17px "Liberation Serif", serif; fill: #4c4d4f; }
.t-mini { font: bold 7px "Liberation Sans", sans-serif; fill: var(--icon); }
.t-cal { font: bold 11px "Liberation Sans", sans-serif; fill: #4c4d4f; }
.t-gray { fill: #8f9092; }
.t-xml { font: bold 7px "Liberation Sans", sans-serif; fill: #4c4d4f; }
.t-lang { font: bold 8px "Noto Sans CJK KR", sans-serif; fill: #4c4d4f; }
.t-fx { font: italic 13px "Liberation Serif", serif; fill: #4c4d4f; }
.t-sort { font: bold 16px "Liberation Sans", sans-serif; fill: var(--icon); }

.grip {
  width: 3px;
  height: 23px;
  background: repeating-linear-gradient(#858688 0 2px, transparent 2px 3px);
  -webkit-mask: linear-gradient(90deg, #000 1px, transparent 1px 2px, #000 2px);
}
.sep {
  width: 1px;
  height: 18px;
  border-left: 1px solid #a8aaac;
}
.caret {
  border: 5px solid transparent;
  border-top: 5px solid #56575a;
  border-bottom: 0;
}
.caret.small {
  border-width: 3px 3px 0;
}
.tri {
  flex: none;
  border: 4px solid transparent;
}
.tri.left { border-right-color: #56575a; border-left: 0; }
.tri.right { border-left-color: #56575a; border-right: 0; }
.tri.up { border-bottom-color: #56575a; border-top: 0; }
.tri.down { border-top-color: #56575a; border-bottom: 0; }

/* title bar */
.titlebar {
  position: relative;
  flex: none;
  display: flex;
  align-items: center;
  height: 29px;
  padding-right: 7px;
  background: #c6c8ca;
}
.logo {
  width: 224px;
  height: 29px;
  padding-left: 20px;
  background: #173a85;
  color: #fff;
  font: bold 21px/26px "Noto Sans", sans-serif;
  white-space: nowrap;
}
.logo sup {
  display: inline-block;
  padding: 0 1px;
  border: 1px solid #fff;
  font-size: 8px;
  line-height: 8px;
  vertical-align: 7px;
}
.titlebar h1 {
  margin-left: 24px;
  padding-bottom: 4px;
  font-size: 16px;
  line-height: 24px;
}
.loading {
  position: absolute;
  top: 0;
  left: 809px;
  width: 301px;
  height: 1px;
  background: #eceded;
}
.loading span {
  display: block;
  width: 60px;
  height: 1px;
  background: var(--blue);
}
.winbtns {
  display: flex;
  align-items: center;
  gap: 15px;
  margin-left: auto;
}

/* menu */
.menubar {
  flex: none;
  display: flex;
  align-items: center;
  gap: 35px;
  height: 40px;
  padding: 0 7px 0 8px;
  border-bottom: 1px solid #a8aaac;
  font-family: "Noto Sans", "Open Sans", sans-serif;
}
.menubar .grip {
  margin-right: -19px;
}
.menu-right {
  display: flex;
  align-items: center;
  gap: 12px;
  margin-left: auto;
}
.round-help {
  width: 18px;
  height: 18px;
  border: 1px solid #77787a;
  border-radius: 9px;
  color: #e0303c;
  font-weight: bold;
}

/* toolbars */
.toolbars {
  flex: none;
  padding: 1px 0 10px;
}
.toolbar {
  display: flex;
  align-items: center;
  height: 32px;
  padding-left: 8px;
}
.toolbar .grip {
  margin-right: 7px;
}
.toolbar button + .grip {
  margin: 0 10px;
}
.toolbar button {
  width: 34px;
  height: 26px;
}
.toolbar svg, .prop-tools svg {
  width: 20px;
  height: 20px;
}
.toolbar .drop {
  width: 15px;
}
.toolbar .on {
  width: 28px;
  margin: 0 3px;
}
.on:is(button) {
  border: 1px solid #2f8ff5;
  background: #bcdcff;
}
.select {
  position: relative;
  display: block;
}
.select select {
  appearance: none;
  display: block;
  width: 100%;
  height: 27px;
  padding: 0 16px 0 4px;
  border: 1px solid var(--line);
  background: #fff;
}
.select::after {
  content: "";
  position: absolute;
  right: 7px;
  top: 11px;
  border: 5px solid transparent;
  border-top-color: #56575a;
  border-bottom: 0;
}
.screen {
  width: 186px;
  margin: 0 8px 0 5px;
}
.runtime {
  width: 218px;
  margin-right: 3px;
}

/* workspace */
.workspace {
  flex: 1;
  display: flex;
  min-height: 0;
}
.panel {
  display: flex;
  flex-direction: column;
  min-width: 0;
  border: 1px solid var(--line);
}
.explorer { width: 260px; }
.editor { flex: 1; }
.properties { width: 256px; border-right: 0; }
.panel-head, .dock-head {
  flex: none;
  display: flex;
  align-items: center;
  gap: 8px;
  height: 38px;
  padding: 0 8px 0 9px;
}
.panel-head h2, .dock-head h2 {
  flex: 1;
}
.split-v, .split-h {
  flex: none;
  display: flex;
  align-items: center;
  justify-content: center;
}
.split-v { width: 9px; }
.split-v.wide { width: 10px; }
.split-h { height: 8px; }
.split-v span {
  width: 3px;
  height: 50px;
  background: repeating-linear-gradient(#858688 0 1px, transparent 1px 3px);
  -webkit-mask: linear-gradient(90deg, #000 1px, transparent 1px 2px, #000 2px);
}
.split-h span {
  width: 50px;
  height: 3px;
  background: repeating-linear-gradient(90deg, #858688 0 1px, transparent 1px 3px);
  -webkit-mask: linear-gradient(#000 1px, transparent 1px 2px, #000 2px);
}
.filters {
  flex: none;
  display: flex;
  flex-direction: column;
  gap: 4px;
  padding: 4px 6px 3px;
}
.field {
  flex: 1;
  display: flex;
  align-items: center;
  gap: 9px;
  min-width: 0;
  height: 27px;
  padding-right: 6px;
  border: 1px solid var(--line);
  background: #fff;
}
.field input {
  flex: 1;
  min-width: 0;
  height: 25px;
  padding: 0 3px;
  border: 0;
}
.clear {
  opacity: 0.6;
}
.search-row {
  display: flex;
  align-items: center;
}
.search-row .field { margin-right: 11px; }
.search-row > button + button { margin: 0 6px 0 15px; }

/* tree */
.tree {
  flex: 1;
  min-height: 0;
  overflow: hidden;
  background: var(--light);
}
.root {
  display: flex;
  align-items: center;
  gap: 11px;
  height: 23px;
  padding-left: 3px;
}
.tree ul ul {
  padding-left: 24px;
}
.node {
  display: flex;
  align-items: center;
  height: 22px;
  white-space: nowrap;
}
.node i {
  position: relative;
  flex: none;
  width: 22px;
  height: 8px;
}
.node svg {
  width: 20px;
  height: 20px;
  margin: 0 4px;
}
.node span {
  padding: 2px 3px;
}
.open > i::before, .shut > i::before {
  content: "";
  position: absolute;
  left: 8px;
  top: 1px;
}
.open > i::before {
  border-left: 6px solid transparent;
  border-bottom: 6px solid #333;
}
.shut > i::before {
  width: 5px;
  height: 9px;
  top: -1px;
  left: 9px;
  background: #56575a;
  clip-path: polygon(0 0, 100% 50%, 0 100%, 0 0, 1px 2px, 1px 7px, 3px 4px, 1px 2px);
}
.selected span {
  background: #bcdcff;
  color: #111;
}

/* scroll bars */
.hscroll, .vscroll {
  flex: none;
  display: flex;
  align-items: center;
}
.hscroll { height: 23px; padding: 0 8px 0 7px; }
.vscroll { flex-direction: column; width: 21px; padding: 8px 0; }
.rail { flex: 1; }
.rail b { display: block; background: #949494; }
.hscroll .rail { margin-left: 13px; }
.hscroll .rail b { height: 13px; }
.vscroll .rail { margin-top: 11px; }
.vscroll .rail b { width: 13px; }
.explorer .rail b { width: 159px; }

/* bottom tabs */
.tabs {
  flex: none;
  display: flex;
  height: 41px;
  padding: 0 4px 0 5px;
  border-top: 1px solid var(--line);
  background: var(--strip);
}
.tabs > button {
  height: 33px;
  border: 1px solid var(--line);
  border-top: 0;
  flex: 1 0 auto;
}
.explorer .tabs > button { flex: 1 0 0; }
.tabs > button + button {
  border-left: 0;
}
.tabs > .active {
  height: 34px;
  margin-top: -1px;
  background: var(--bg);
}
.view-tabs { height: 40px; padding-left: 3px; }
.view-tabs > button { flex: none; width: 98px; }
.view-tabs > .active { width: 99px; }
.zoombar {
  display: flex;
  align-items: center;
  margin: 0 10px 0 auto;
  height: 38px;
}
.zoombar label { margin: 0 15px 0 5px; }
.zoombar .sep { border-color: #858688; width: 6px; }
.minus, .plus {
  width: 14px;
  height: 14px;
  background: linear-gradient(var(--icon), var(--icon)) center / 12px 2px no-repeat;
}
.plus {
  background: linear-gradient(var(--icon), var(--icon)) center / 12px 2px no-repeat,
    linear-gradient(var(--icon), var(--icon)) center / 2px 12px no-repeat;
}
.zoombar .minus { margin: 0 8px 0 18px; }
.zoombar .plus { margin-left: 12px; }
#zoom {
  appearance: none;
  width: 128px;
  height: 14px;
  margin: 0;
  background: linear-gradient(#7d7e80, #7d7e80) center top 4px / 100% 2px no-repeat,
    linear-gradient(#7d7e80, #7d7e80) center top / 2px 10px no-repeat;
}
#zoom::-webkit-slider-thumb {
  appearance: none;
  width: 12px;
  height: 12px;
  border-radius: 6px;
  background: #58595b;
}

/* editor */
.doc-tabs {
  flex: none;
  display: flex;
  height: 35px;
  border-bottom: 1px solid var(--line);
  background: var(--strip);
}
.doc-tab {
  display: flex;
  align-items: center;
  height: 35px;
  padding: 0 8px 2px 6px;
  gap: 9px;
  border-right: 1px solid var(--line);
  background: var(--bg);
}
.doc-tab span { margin-left: -5px; }
.doc-tabs .winbtns { gap: 11px; margin-right: 8px; }
.layoutbar {
  flex: none;
  display: flex;
  align-items: center;
  gap: 6px;
  height: 35px;
  padding: 0 8px;
  border-bottom: 1px solid #a8aaac;
}
.layoutbar .sep { margin-left: 2px; }
.layoutbar > button { width: 20px; }
.layout-icon {
  width: 18px;
  height: 18px;
  border: 1px solid var(--icon);
  border-width: 1px 2px 2px 1px;
  background: #e4e6e8;
  outline: 1px dashed var(--icon);
  outline-offset: -5px;
}
.layoutbar label { margin: 0 4px 0 auto; color: #77787a; }
.layoutbar .minus { height: 14px; opacity: 0.5; background-size: 15px 2px; }
.layoutbar .plus {
  width: 18px;
  height: 16px;
  background: linear-gradient(var(--blue), var(--blue)) center / 15px 2px no-repeat,
    linear-gradient(var(--blue), var(--blue)) center / 2px 15px no-repeat;
}
#step {
  width: 48px;
  height: 27px;
  border: 1px solid var(--line);
  text-align: center;
}
.stage {
  flex: 1;
  position: relative;
  display: grid;
  grid-template-columns: 29px 1fr 21px;
  grid-template-rows: 30px 1fr 21px;
  min-height: 0;
}
.ruler-h { grid-area: 1 / 2; width: 100%; height: 30px; }
.ruler-v { grid-area: 2 / 1; width: 29px; height: 100%; }
.ruler-h, .ruler-v, .canvas { min-width: 0; min-height: 0; overflow: hidden; }
.ruler-h path, .ruler-v path { stroke: #8d8f91; }
.ruler-h .cursor, .ruler-v .cursor { stroke: #1a1a1a; }
.ruler-h text, .ruler-v text { font: 13px "DejaVu Sans", sans-serif; fill: var(--text); }
.ruler-left { grid-area: 1 / 2; place-self: center start; margin: -5px 0 0 6px; }
.ruler-up { grid-area: 2 / 1; place-self: start center; margin: 6px 5px 0 0; }
.canvas {
  grid-area: 2 / 2;
  padding: 13px 14px;
  background: #98999b;
  border-top: 1px solid #8d8f91;
}
.form {
  position: relative;
  width: calc(1280px * var(--zoom));
  height: calc(720px * var(--zoom));
  background: #fff radial-gradient(circle at 100% 100%, #ccc 1px, transparent 1px);
  background-size: calc(10px * var(--zoom)) calc(10px * var(--zoom));
}
.handle {
  position: absolute;
  width: 8px;
  height: 8px;
  background: #7c7d7f;
}
.handle.live { background: #2e5080; }
.tl, .tc, .tr { top: -7px; }
.bl, .bc, .br { bottom: -7px; }
.tl, .ml, .bl { left: -7px; }
.tr, .mr, .br { right: -7px; }
.tc, .bc { left: calc(50% - 4px); }
.ml, .mr { top: calc(50% - 4px); }
.stage .vscroll { grid-area: 1 / 3 / 3 / 4; padding: 10px 0 7px; }
.stage .vscroll .rail b { height: 16px; }
.stage .hscroll { grid-area: 3 / 1 / 4 / 3; height: 21px; padding: 0 7px 0 9px; }
.stage .hscroll .rail { margin-left: 11px; }
.stage .hscroll b { width: 134px; }
.docks {
  flex: none;
  display: flex;
  margin-bottom: 8px;
}
.dock {
  flex: 1;
  height: 69px;
  border: 1px solid var(--line);
  background: var(--light);
}
.dock-head {
  height: 25px;
  border-bottom: 1px solid var(--line);
  background: var(--bg);
}
.dock-filter {
  padding: 4px 6px 3px;
  background: var(--bg);
}

/* properties */
.target {
  justify-content: flex-start;
  gap: 12px;
  height: 27px;
  padding: 0 7px 0 4px;
  border: 1px solid var(--line);
  background: #fff;
  color: #58595b;
}
.target .caret { margin-left: auto; }
.prop-tools {
  display: flex;
  align-items: center;
  margin: -2px -1px 0;
  height: 27px;
}
.prop-tools button { width: 34px; height: 26px; }
.prop-tools button.on { width: 28px; margin-right: 3px; }
.prop-tools .sep + .on { margin-left: 4px; }
.properties .field { flex: none; }
.properties .filters { padding-bottom: 3px; }
.prop-body {
  flex: 1;
  display: flex;
  min-height: 0;
}
.prop-list {
  flex: 1;
  overflow: hidden;
}
.prop-list table {
  width: 100%;
  border-spacing: 0;
  table-layout: fixed;
}
.col-mark { width: 18px; }
.col-name { width: 146px; }
.prop-list td, .prop-list th {
  height: 29px;
  padding: 0 0 0 5px;
  border-bottom: 1px solid #b4b6b8;
  background: #fff;
  text-align: left;
  font-weight: normal;
}
.prop-list td:first-child {
  background: var(--bg);
  border-color: var(--bg);
}
.prop-list th {
  padding-left: 17px;
  border-right: 1px solid #b4b6b8;
  background: var(--light);
}
.prop-list .group th, .prop-list .group td {
  border-right: 0;
  background: var(--bg);
  border-color: var(--bg);
}
.prop-list .last th, .prop-list .last td,
.prop-list .last td:first-child { border-color: #b4b6b8; }
.prop-list .readonly { color: #858688; }
.prop-list .tri { display: block; width: 0; }
.properties .vscroll .rail { margin-top: 12px; }
.properties .vscroll .rail b { height: 127px; }
.prop-desc {
  flex: none;
  height: 53px;
  margin: 4px 4px 7px;
  border: 1px solid #b4b6b8;
  background: var(--light);
}

/* output */
.output {
  flex: none;
  border: 1px solid var(--line);
  border-right: 0;
  border-bottom-width: 2px;
}
.output-body {
  display: flex;
  height: 22px;
  background: var(--light);
}
.output-body p {
  flex: 1;
  padding-left: 12px;
  color: #000;
  font: 13px/20px "DejaVu Sans", sans-serif;
}
.output-body .vscroll {
  gap: 7px;
  padding: 4px 0;
  background: var(--bg);
}

.statusbar {
  flex: none;
  display: flex;
  align-items: center;
  gap: 10px;
  height: 29px;
  padding: 0 4px 0 15px;
  color: #77787a;
  font-family: "Noto Sans", sans-serif;
}
.ready { margin-right: auto; }
.statusbar .on { color: #2e8bf5; }
.statusbar .wide { margin-left: 9px; }
```
FILE: ruler.js
```js
const ZOOM = 0.65;
const ORIGIN = 14; // form offset inside the canvas
const NS = 'http://www.w3.org/2000/svg';

function add(svg, name, attrs, text) {
  const el = document.createElementNS(NS, name);
  for (const key in attrs) el.setAttribute(key, attrs[key]);
  if (text) el.textContent = text;
  svg.appendChild(el);
}

function drawRuler(svg, vertical, cursor) {
  const length = vertical ? svg.clientHeight : svg.clientWidth;
  const edge = vertical ? 29 : 30;
  for (let unit = 5; ORIGIN + unit * ZOOM < length; unit += 5) {
    const pos = Math.floor(ORIGIN + unit * ZOOM) + 0.5;
    const size = unit % 50 === 0 ? 19 : unit % 25 === 0 ? 9 : 5;
    const d = vertical ? `M${edge - size} ${pos}H${edge}` : `M${pos} ${edge - size}V${edge}`;
    add(svg, 'path', { d: d });
    if (unit % 50 === 0) {
      if (vertical) {
        add(svg, 'text', { transform: `translate(21 ${pos + 4}) rotate(-90)`, 'text-anchor': 'end' }, unit);
      } else {
        add(svg, 'text', { x: pos + 4, y: 21 }, unit);
      }
    }
  }
  const line = vertical ? `M9 ${cursor}H29` : `M${cursor} 10V30`;
  add(svg, 'path', { d: line, class: 'cursor' });
}

drawRuler(document.getElementById('rulerH'), false, 916.5);
drawRuler(document.getElementById('rulerV'), true, 366.5);
```
